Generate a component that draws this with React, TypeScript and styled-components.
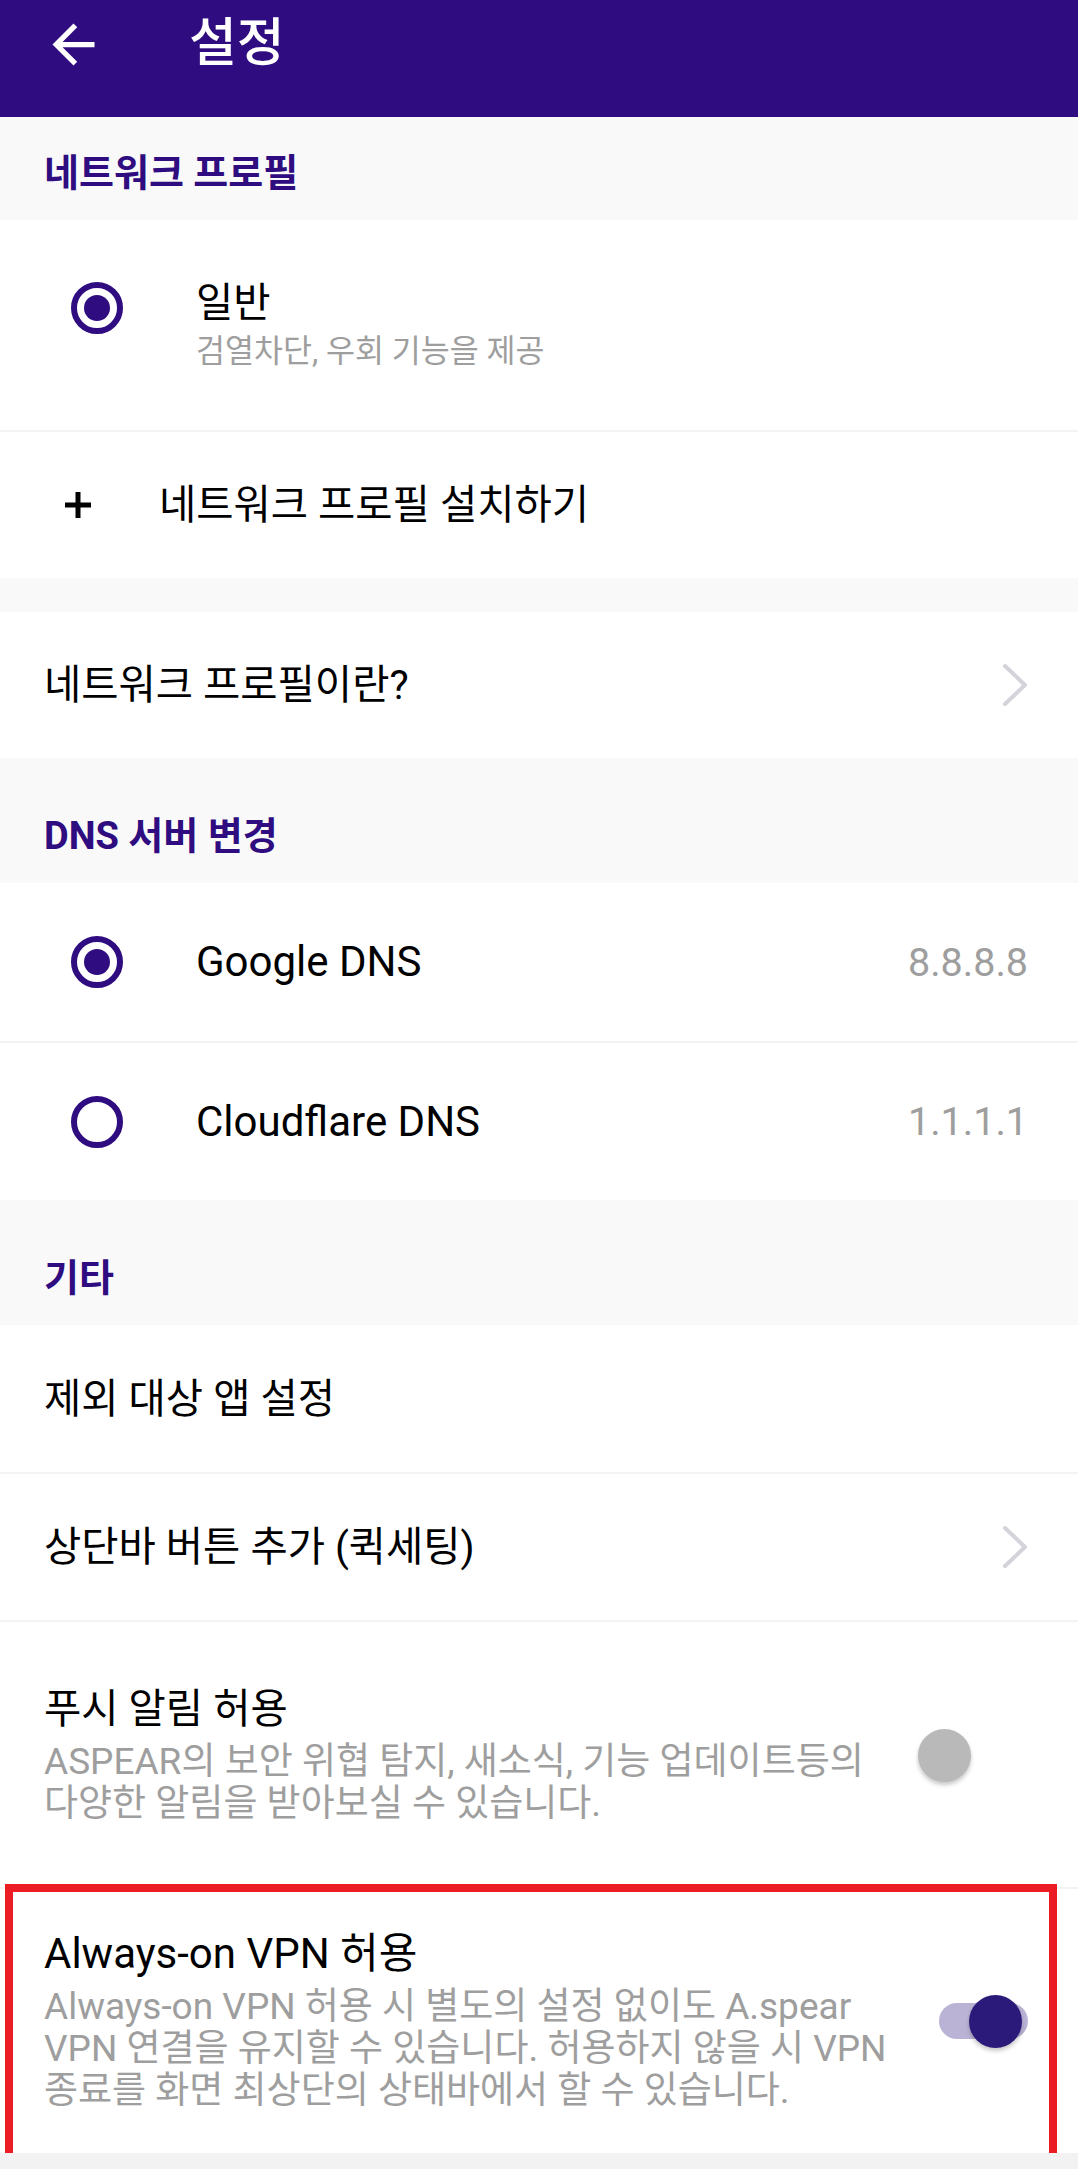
import styled, { createGlobalStyle } from 'styled-components';

const GlobalStyle = createGlobalStyle`
  html, body {
    margin: 0;
    padding: 0;
    background: #f2f2f2;
  }
  body {
    font-family: Roboto, "Noto Sans CJK KR", sans-serif;
    color: #000;
  }
  * {
    box-sizing: border-box;
  }
`;

const Page = styled.div`
  width: 1078px;
  display: flex;
  flex-direction: column;
  background: #fff;
`;

const Header = styled.header`
  height: 117px;
  display: flex;
  align-items: center;
  padding: 0 0 29px 42px;
  background: #2f0c7f;
  color: #fff;
`;

const BackButton = styled.button`
  width: 63px;
  height: 63px;
  padding: 0;
  border: 0;
  background: none;
  display: flex;
  align-items: center;
  justify-content: center;
  svg {
    width: 63px;
    height: 63px;
    fill: #fff;
  }
`;

const HeaderTitle = styled.h1`
  margin: 0 0 0 84px;
  font-size: 52px;
  line-height: 1;
  font-weight: 500;
`;

const SectionHeader = styled.div<{ $h: number }>`
  height: ${(p) => p.$h}px;
  display: flex;
  align-items: flex-end;
  padding: 0 44px 26px;
  background: #f9f9fa;
  color: #2f0c7f;
  font-size: 38px;
  line-height: 42px;
  font-weight: 700;
`;

const Spacer = styled.div`
  height: 34px;
  background: #f9f9fa;
`;

const Row = styled.div<{ $h: number }>`
  position: relative;
  height: ${(p) => p.$h}px;
  display: flex;
  align-items: center;
  padding: 0 50px 0 44px;
  background: #fff;
  & + & {
    border-top: 2px solid #f3f3f4;
  }
`;

const Radio = styled.span<{ $on?: boolean; $lift?: number }>`
  flex: none;
  width: 52px;
  height: 52px;
  margin: 0 73px ${(p) => (p.$lift ?? 0) * 2}px 27px;
  border-radius: 50%;
  border: 6px solid #2f0c7f;
  display: flex;
  align-items: center;
  justify-content: center;
  &::after {
    content: '';
    width: 26px;
    height: 26px;
    border-radius: 50%;
    background: ${(p) => (p.$on ? '#2f0c7f' : 'transparent')};
  }
`;

const PlusIcon = styled.svg`
  flex: none;
  width: 28px;
  height: 28px;
  margin: 0 67px 0 20px;
`;

const TextBlock = styled.div`
  flex: 1;
  display: flex;
  flex-direction: column;
  min-width: 0;
`;

const Title = styled.div<{ $size?: number }>`
  font-size: ${(p) => p.$size ?? 40.5}px;
  line-height: 48px;
  color: #000;
  white-space: nowrap;
`;

const Note = styled.div`
  margin-top: 6px;
  font-size: 31.5px;
  line-height: 38px;
  color: #9e9e9e;
`;

const Description = styled.div`
  margin-top: 8px;
  font-size: 37px;
  line-height: 42px;
  color: #9e9e9e;
  white-space: nowrap;
`;

const Value = styled.span`
  margin-left: auto;
  font-size: 39.5px;
  color: #9e9e9e;
`;

const Chevron = styled.svg`
  flex: none;
  width: 26px;
  height: 44px;
  margin-left: auto;
`;

const SwitchBox = styled.span`
  position: relative;
  flex: none;
  width: 110px;
  height: 54px;
`;

const SwitchTrack = styled.span<{ $on?: boolean }>`
  position: absolute;
  left: 21px;
  right: 0;
  top: 9px;
  height: 36px;
  border-radius: 18px;
  background: ${(p) => (p.$on ? '#bab3d6' : 'transparent')};
`;

const SwitchThumb = styled.span<{ $on?: boolean }>`
  position: absolute;
  top: 1px;
  left: ${(p) => (p.$on ? 51 : 0)}px;
  width: 53px;
  height: 53px;
  border-radius: 50%;
  background: ${(p) => (p.$on ? '#2c1a7a' : '#b9b9b9')};
  box-shadow: 0 3px 4px rgba(0, 0, 0, 0.22);
`;

const Highlight = styled.span`
  position: absolute;
  left: 5px;
  right: 21px;
  top: -5px;
  bottom: -10px;
  border: 8px solid #ec1c24;
  pointer-events: none;
  z-index: 2;
`;

const Switch = ({ on }: { on?: boolean }) => (
  <SwitchBox>
    <SwitchTrack $on={on} />
    <SwitchThumb $on={on} />
  </SwitchBox>
);

const Arrow = () => (
  <Chevron viewBox="0 0 26 44">
    <polyline
      points="3,3 23,22 3,41"
      fill="none"
      stroke="#d3d3da"
      strokeWidth="4"
      strokeLinecap="round"
      strokeLinejoin="round"
    />
  </Chevron>
);

export default function App() {
  return (
    <>
      <GlobalStyle />
      <Page>
        <Header>
          <BackButton aria-label="뒤로">
            <svg viewBox="0 0 24 24">
              <path d="M20 11H7.83l5.59-5.59L12 4l-8 8 8 8 1.41-1.41L7.83 13H20v-2z" />
            </svg>
          </BackButton>
          <HeaderTitle>설정</HeaderTitle>
        </Header>

        <SectionHeader $h={103}>네트워크 프로필</SectionHeader>
        <Row $h={210}>
          <Radio $on $lift={17} />
          <TextBlock>
            <Title>일반</Title>
            <Note>검열차단, 우회 기능을 제공</Note>
          </TextBlock>
        </Row>
        <Row $h={148}>
          <PlusIcon viewBox="0 0 28 28">
            <path d="M14 1v26M1 14h26" stroke="#000" strokeWidth="5" />
          </PlusIcon>
          <Title>네트워크 프로필 설치하기</Title>
        </Row>
        <Spacer />
        <Row $h={146}>
          <Title>네트워크 프로필이란?</Title>
          <Arrow />
        </Row>

        <SectionHeader $h={125}>DNS 서버 변경</SectionHeader>
        <Row $h={158}>
          <Radio $on />
          <Title $size={42}>Google DNS</Title>
          <Value>8.8.8.8</Value>
        </Row>
        <Row $h={159}>
          <Radio />
          <Title $size={42}>Cloudflare DNS</Title>
          <Value>1.1.1.1</Value>
        </Row>

        <SectionHeader $h={125}>기타</SectionHeader>
        <Row $h={147}>
          <Title>제외 대상 앱 설정</Title>
        </Row>
        <Row $h={148}>
          <Title>상단바 버튼 추가 (퀵세팅)</Title>
          <Arrow />
        </Row>
        <Row $h={267}>
          <TextBlock>
            <Title>푸시 알림 허용</Title>
            <Description>
              ASPEAR의 보안 위협 탐지, 새소식, 기능 업데이트등의
              <br />
              다양한 알림을 받아보실 수 있습니다.
            </Description>
          </TextBlock>
          <Switch />
        </Row>
        <Row $h={266}>
          <TextBlock>
            <Title $size={42}>Always-on VPN 허용</Title>
            <Description>
              Always-on VPN 허용 시 별도의 설정 없이도 A.spear
              <br />
              VPN 연결을 유지할 수 있습니다. 허용하지 않을 시 VPN
              <br />
              종료를 화면 최상단의 상태바에서 할 수 있습니다.
            </Description>
          </TextBlock>
          <Switch on />
          <Highlight />
        </Row>
      </Page>
    </>
  );
}
